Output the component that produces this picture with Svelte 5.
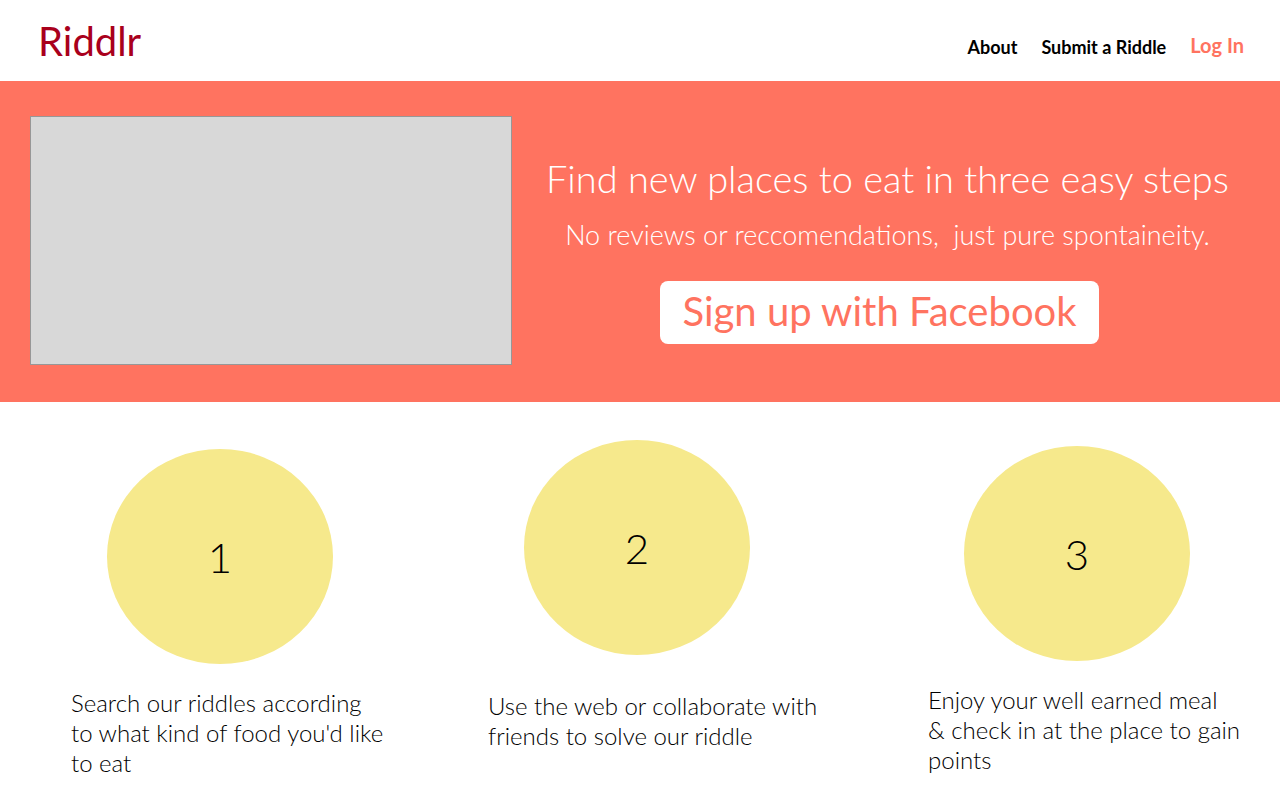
<script>
  const steps = [
    { n: 1, text: "Search our riddles according to\u00a0what kind of food you'd like to\u00a0eat" },
    { n: 2, text: 'Use the web or collaborate with friends to solve our riddle' },
    { n: 3, text: 'Enjoy your well earned meal &\u00a0check in at the place to gain points' }
  ];
</script>

<header>
  <a class="logo" href="#home">Riddlr</a>
  <nav>
    <a href="#about">About</a>
    <a href="#submit">Submit a Riddle</a>
    <a class="login" href="#login">Log In</a>
  </nav>
</header>

<section class="hero">
  <div class="media"></div>
  <div class="pitch">
    <h1>Find new places to eat in three easy steps</h1>
    <p>No reviews or reccomendations, &nbsp;just pure spontaineity.</p>
    <button type="button">Sign up with Facebook</button>
  </div>
</section>

<main>
  {#each steps as step}
    <article class="step s{step.n}">
      <div class="circle">{step.n}</div>
      <p>{step.text}</p>
    </article>
  {/each}
</main>

<style>
  :global(body) { margin: 0; background: #fff; font-family: Lato, sans-serif; }
  header { display: flex; justify-content: space-between; align-items: center; min-height: 81px; padding: 0 36px 0 38px; }
  .logo { color: #a9001c; font-size: 40px; line-height: 48px; text-decoration: none; }
  nav { display: flex; align-items: center; gap: 24px; padding-top: 12px; }
  nav a { color: #000; font-size: 18px; line-height: 24px; font-weight: 700; text-decoration: none; }
  nav .login { color: #ff7360; font-size: 20px; padding-bottom: 4px; }
  .hero { display: grid; grid-template-columns: minmax(0, 482fr) minmax(0, 695fr); gap: 28px; padding: 35px 45px 37px 30px; background: #ff7360; }
  .media { min-height: 247px; background: #d8d8d8; border: 1px solid #979797; }
  .pitch { display: flex; flex-direction: column; align-items: center; color: #fff; padding-top: 37px; text-align: center; }
  h1 { margin: 0; font-size: 38px; line-height: 50px; font-weight: 300; }
  p { margin: 0; }
  .pitch p { margin-top: 14px; font-size: 27px; line-height: 36px; font-weight: 300; }
  button { margin: 28px 16px 0 0; padding: 6px 22px 9px; border: 0; border-radius: 8px; background: #fff; color: #ff7360; font: 400 40px/48px Lato, sans-serif; }
  main { display: grid; grid-template-columns: 417fr 440fr 352fr; padding-left: 71px; }
  .circle { width: 226px; height: 215px; margin-left: 36px; border-radius: 50%; background: #f6e98c; display: flex; align-items: center; justify-content: center; font-size: 42px; font-weight: 300; }
  .step p { max-width: 340px; font-size: 24px; line-height: 30px; font-weight: 300; margin-top: 24px; }
  .s1 { padding-top: 47px; }
  .s2 { padding-top: 38px; }
  .s2 p { margin-top: 36px; }
  .s3 { padding-top: 44px; }
</style>
